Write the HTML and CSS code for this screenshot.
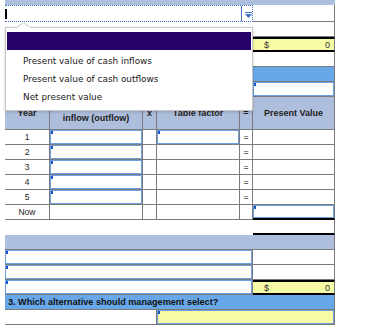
FILE: index.html
```html
<!DOCTYPE html>
<html>
<head>
<meta charset="utf-8">
<link rel="stylesheet" href="styles.css">
</head>
<body>
<div class="sheet">
  <div class="row r-top"><div class="c span6 bg-grey"></div></div>

  <div class="row r-select">
    <div class="select span5">
      <span class="caret"></span>
      <span class="sel-sep"></span>
      <svg class="sel-arrow" width="7" height="6" viewBox="0 0 7 6"><rect x="0" y="0" width="7" height="1" fill="#3b70c8"/><polygon points="0,2 7,2 3.5,6" fill="#3b70c8"/></svg>
    </div>
    <div class="c pv"></div>
  </div>

  <div class="row"><div class="c span5 nob"></div><div class="c pv"></div></div>
  <div class="row r-total"><div class="c span5 nob"></div><div class="c pv total"><span>$</span><span>0</span></div></div>
  <div class="row"><div class="c span5 nob"></div><div class="c pv"></div></div>
  <div class="row"><div class="c span6 bg-blue"></div></div>
  <div class="row"><div class="c span5 nob"></div><div class="c pv"><div class="inp mark"></div></div></div>

  <div class="row head">
    <div class="c hc">Year</div>
    <div class="c hc">Cash<br>inflow (outflow)</div>
    <div class="c hc">x</div>
    <div class="c hc">Table factor</div>
    <div class="c hc">=</div>
    <div class="c hc">Present Value</div>
  </div>

  <div class="row"><div class="c yr">1</div><div class="c"><div class="inp mark"></div></div><div class="c"></div><div class="c"><div class="inp mark"></div></div><div class="c eq">=</div><div class="c"></div></div>
  <div class="row"><div class="c yr">2</div><div class="c"><div class="inp mark"></div></div><div class="c"></div><div class="c"></div><div class="c eq">=</div><div class="c"></div></div>
  <div class="row"><div class="c yr">3</div><div class="c"><div class="inp mark"></div></div><div class="c"></div><div class="c"></div><div class="c eq">=</div><div class="c"></div></div>
  <div class="row"><div class="c yr">4</div><div class="c"><div class="inp mark"></div></div><div class="c"></div><div class="c"></div><div class="c eq">=</div><div class="c"></div></div>
  <div class="row"><div class="c yr">5</div><div class="c"><div class="inp mark"></div></div><div class="c"></div><div class="c"></div><div class="c eq">=</div><div class="c"></div></div>
  <div class="row"><div class="c yr">Now</div><div class="c"></div><div class="c"></div><div class="c"></div><div class="c"></div><div class="c pv blackb"><div class="inp mark"></div></div></div>

  <div class="row"><div class="c span5 nob"></div><div class="c pv blackb"></div></div>
  <div class="row"><div class="c span6 bg-grey"></div></div>
  <div class="row"><div class="c span5"><div class="inp mark"></div></div><div class="c pv"></div></div>
  <div class="row"><div class="c span5"><div class="inp mark"></div></div><div class="c pv"></div></div>
  <div class="row r-total"><div class="c span5"><div class="inp mark"></div></div><div class="c pv total"><span>$</span><span>0</span></div></div>
  <div class="row"><div class="c span6 bg-blue q">3. Which alternative should management select?</div></div>
  <div class="row"><div class="c span3"></div><div class="c span3 bg-yellow"><div class="inp mark yel"></div></div></div>

  <div class="popup">
    <svg class="notch" width="13" height="6" viewBox="0 0 13 6"><polygon points="0,5.5 6.5,0.5 13,5.5" fill="#fff" stroke="#c6c6c6" stroke-width="1"/><rect x="0" y="5" width="13" height="2" fill="#fff"/></svg>
    <div class="opt sel"></div>
    <div class="opt first">Present value of cash inflows</div>
    <div class="opt">Present value of cash outflows</div>
    <div class="opt">Net present value</div>
  </div>
</div>
</body>
</html>
```

FILE: styles.css
```css
* { box-sizing: border-box; }
html, body { margin: 0; padding: 0; background: #fff; }
body { width: 387px; height: 335px; overflow: hidden; font-family: "Liberation Sans", Arial, sans-serif; }

.sheet { position: relative; margin-left: 5px; width: 330px; }

.row {
  display: grid;
  grid-template-columns: 45px 93px 14px 83px 13px 82px;
  height: 15px;
}
.r-top { height: 5px; }
.r-select { height: 17px; }
.head { height: 33px; }

.c {
  border-right: 1px solid #7b7b7b;
  border-bottom: 1px solid #7b7b7b;
  position: relative;
  font-size: 9px;
  color: #222;
}
.span6 { grid-column: span 6; }
.span5 { grid-column: span 5; }
.span3 { grid-column: span 3; }
.nob { border: none; }
.r-top .c { border: none; }

.bg-grey { background: #aebfdd; }
.bg-blue { background: #68a8e8; }
.bg-yellow { background: #f8fba6; }

.select {
  position: relative;
  border-top: 1px dotted #3b6fc6;
  border-bottom: 1px dotted #3b6fc6;
  border-right: 1px dotted #3b6fc6;
  background: #fff;
}
.caret { position: absolute; left: 0; top: 3px; width: 2px; height: 10px; background: #000; }
.sel-sep { position: absolute; left: 236px; top: 0; width: 1px; height: 15px; background: #3b6fc6; }
.sel-arrow { position: absolute; left: 240px; top: 6px; }

.pv { border-right: 1px solid #7b7b7b; }

.total {
  background: #f8fba6;
  border-top: 2px solid #000;
  border-bottom: 2px solid #000;
  display: flex;
  justify-content: space-between;
  align-items: center;
  padding: 0 4px 0 11px;
  font-size: 9px;
  color: #333;
}

.blackb { border-bottom: 2px solid #000; }

.head .c {
  background: #aebfdd;
  font-weight: bold;
  display: flex;
  align-items: center;
  justify-content: center;
  text-align: center;
  line-height: 10px;
  color: #222;
}

.yr { display: flex; align-items: center; justify-content: center; font-size: 8.5px; }
.eq { display: flex; align-items: center; justify-content: center; font-weight: bold; color: #666; font-size: 8px; }

.inp {
  position: absolute;
  inset: 0;
  box-shadow: inset 0 0 0 1px #6d9fe2;
}
.inp.mark::before {
  content: "";
  position: absolute;
  left: 1px; top: 1px;
  width: 2px; height: 3px;
  background: #1a55c7;
}

.q {
  font-weight: bold;
  font-size: 9.1px;
  color: #111;
  display: flex;
  align-items: center;
  padding-left: 3px;
}

.popup {
  position: absolute;
  left: 0;
  top: 27px;
  width: 248px;
  height: 84px;
  background: #fff;
  border: 1px solid #c6c6c6;
  box-shadow: 0 1px 3px rgba(0,0,0,0.18);
  padding: 4px 1px;
}
.notch { position: absolute; left: 11px; top: -6px; }
.opt {
  height: 18px;
  font-family: "DejaVu Sans", Verdana, sans-serif;
  font-size: 8.9px;
  color: #1a1a1a;
  display: flex;
  align-items: center;
  padding-left: 16px;
}
.opt.first { margin-top: 2px; }
.opt.sel { background: #25016a; }
```
